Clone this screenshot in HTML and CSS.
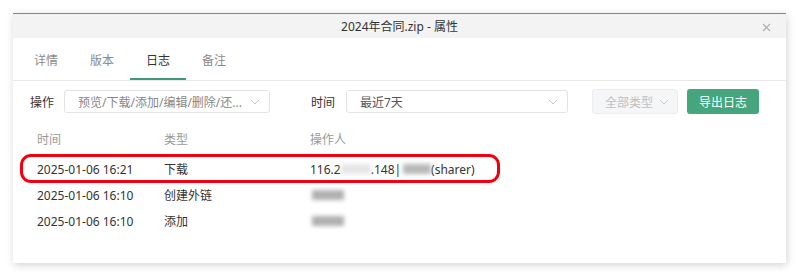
FILE: index.html
```
<!DOCTYPE html>
<html lang="zh-CN">
<head>
    <meta charset="UTF-8">
    <title>2024年合同.zip - 属性</title>
    <link rel="stylesheet" href="styles.css">
</head>
<body>

<div class="dialog">
    <div class="title-bar">
        <span class="title">2024年合同.zip - 属性</span>
        <svg class="close" width="9" height="9" viewBox="0 0 9 9"><path d="M1 1L8 8M8 1L1 8" stroke="#b0b0b0" stroke-width="1.2" fill="none"/></svg>
    </div>

    <div class="tabs">
        <div class="tab">详情</div>
        <div class="tab">版本</div>
        <div class="tab active">日志</div>
        <div class="tab">备注</div>
    </div>

    <div class="content">
        <div class="filters">
            <label class="filter-label">操作</label>
            <div class="select select-op">
                <span>预览/下载/添加/编辑/删除/还...</span>
                <svg class="chevron" width="10" height="6" viewBox="0 0 10 6"><path d="M1 1L5 5L9 1" stroke="#c4c4c4" stroke-width="1" fill="none"/></svg>
            </div>
            <label class="filter-label label-time">时间</label>
            <div class="select select-time">
                <span class="dark">最近7天</span>
                <svg class="chevron" width="10" height="6" viewBox="0 0 10 6"><path d="M1 1L5 5L9 1" stroke="#c4c4c4" stroke-width="1" fill="none"/></svg>
            </div>
            <div class="select select-type">
                <span>全部类型</span>
                <svg class="chevron" width="10" height="6" viewBox="0 0 10 6"><path d="M1 1L5 5L9 1" stroke="#ccc" stroke-width="1" fill="none"/></svg>
            </div>
            <button class="export-btn">导出日志</button>
        </div>

        <div class="log-table">
            <div class="row head">
                <div class="col-time">时间</div>
                <div class="col-type">类型</div>
                <div class="col-user">操作人</div>
            </div>
            <div class="row">
                <div class="col-time">2025-01-06 16:21</div>
                <div class="col-type">下载</div>
                <div class="col-user">116.2<span class="blur blur-light"></span>.148|<span class="blur blur-dark"></span>(sharer)</div>
                <div class="highlight"></div>
            </div>
            <div class="row">
                <div class="col-time">2025-01-06 16:10</div>
                <div class="col-type">创建外链</div>
                <div class="col-user"><span class="blur blur-name"></span></div>
            </div>
            <div class="row">
                <div class="col-time">2025-01-06 16:10</div>
                <div class="col-type">添加</div>
                <div class="col-user"><span class="blur blur-name"></span></div>
            </div>
        </div>
    </div>
</div>

</body>
</html>
```

FILE: styles.css
```
body {
    font-family: "Noto Sans", "Noto Sans CJK SC", sans-serif;
    font-size: 12px;
    margin: 0;
    padding: 13px;
    background-color: #ffffff;
    color: #333;
}
.dialog {
    width: 773px;
    height: 250px;
    box-sizing: border-box;
    background: #fff;
    border-top: 1px solid #5e9983;
    box-shadow: 1px 2px 8px rgba(0, 0, 0, 0.18);
}
.title-bar {
    position: relative;
    height: 24px;
    background: #f3f3f3;
    display: flex;
    align-items: center;
    justify-content: center;
}
.title {
    color: #333;
}
.close {
    position: absolute;
    right: 15px;
    top: 9px;
}
.tabs {
    display: flex;
    height: 42px;
    padding-left: 5px;
    border-bottom: 1px solid #e8e8e8;
}
.tab {
    width: 56px;
    box-sizing: border-box;
    display: flex;
    align-items: center;
    justify-content: center;
    color: #8a8a8a;
    border-bottom: 2px solid transparent;
    padding-top: 3px;
}
.tab.active {
    color: #333;
    border-bottom-color: #3d9b78;
}
.content {
    padding: 8px 27px 0 17px;
}
.filters {
    display: flex;
    align-items: center;
    height: 25px;
}
.filter-label {
    width: 34px;
    color: #333;
}
.label-time {
    margin-left: 41px;
    width: 35px;
}
.select {
    height: 23px;
    box-sizing: border-box;
    border: 1px solid #e2e2e2;
    border-radius: 3px;
    display: flex;
    align-items: center;
    justify-content: space-between;
    padding: 0 9px 0 13px;
    color: #888;
}
.select .dark {
    color: #555;
}
.select-op {
    width: 206px;
}
.select-time {
    width: 222px;
}
.select-type {
    width: 86px;
    height: 25px;
    margin-left: 24px;
    background: #f5f6f8;
    border-color: #ebedf0;
    color: #c0c0c0;
    padding: 0 8px 0 12px;
}
.export-btn {
    width: 72px;
    height: 25px;
    margin-left: 9px;
    border: none;
    border-radius: 3px;
    background: #45a57c;
    color: #fff;
    font-family: inherit;
    font-size: 12px;
    padding: 0;
}
.log-table {
    margin-top: 12px;
    padding-left: 7px;
}
.row {
    position: relative;
    display: flex;
    align-items: center;
    height: 26px;
    color: #333;
}
.row.head {
    color: #999;
    margin-bottom: 4px;
}
.col-time {
    width: 127px;
}
.col-type {
    width: 146px;
}
.col-user {
    display: flex;
    align-items: center;
}
.blur {
    display: inline-block;
    height: 10px;
    filter: blur(2px);
}
.blur-light {
    width: 30px;
    background: #e6e6e6;
}
.blur-dark {
    width: 28px;
    margin-left: 2px;
    background: #b8b8b8;
}
.blur-name {
    width: 32px;
    margin-left: 2px;
    background: #b0b0b0;
}
.highlight {
    position: absolute;
    left: -17px;
    top: -2px;
    width: 480px;
    height: 29px;
    box-sizing: border-box;
    border: 3px solid #f00010;
    border-radius: 11px;
}
```
